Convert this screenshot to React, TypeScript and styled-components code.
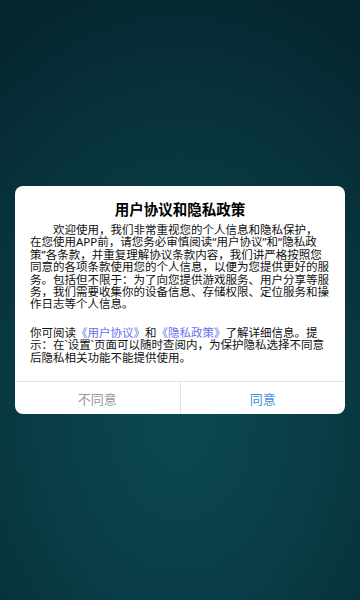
import React from "react";
import styled, { createGlobalStyle } from "styled-components";

const Global = createGlobalStyle`
  html, body { margin: 0; padding: 0; height: 100%; }
  body {
    font-family: "Noto Sans", "Noto Sans CJK SC", sans-serif;
    background: #072a33;
  }
  #root { height: 100%; }
`;

const Screen = styled.div`
  width: 360px;
  height: 600px;
  display: flex;
  align-items: center;
  justify-content: center;
  background: radial-gradient(ellipse 90% 75% at 50% 70%, #0b4952 0%, #093c46 45%, #06262f 100%);
`;

const Dialog = styled.div`
  width: 330px;
  background: #ffffff;
  border-radius: 8px;
  overflow: hidden;
  display: flex;
  flex-direction: column;
`;

const Content = styled.div`
  padding: 13px 15px 17px;
  display: flex;
  flex-direction: column;
`;

const Title = styled.h1`
  margin: 0 0 5px;
  text-align: center;
  font-size: 14.5px;
  line-height: 20px;
  font-weight: 700;
  color: #000;
  font-family: "Noto Sans", "Noto Sans CJK SC", sans-serif;
`;

const Paragraph = styled.p<{ $indent?: boolean; $gap?: number }>`
  margin: 0 0 ${(p) => p.$gap ?? 0}px;
  font-size: 11.5px;
  line-height: 12.4px;
  color: #111;
  text-indent: ${(p) => (p.$indent ? "2em" : "0")};
  word-break: break-all;
`;

const Link = styled.span`
  color: #6670ee;
`;

const Buttons = styled.div`
  display: flex;
  border-top: 1px solid #e2e2e2;
  height: 32px;
`;

const Button = styled.div<{ $primary?: boolean }>`
  flex: 1;
  display: flex;
  align-items: center;
  justify-content: center;
  font-size: 13px;
  color: ${(p) => (p.$primary ? "#4a8fda" : "#9a9a9a")};
  & + & {
    border-left: 1px solid #e2e2e2;
  }
`;

export default function App() {
  return (
    <>
      <Global />
      <Screen>
        <Dialog>
          <Content>
            <Title>用户协议和隐私政策</Title>
            <Paragraph $indent $gap={16}>
              欢迎使用，我们非常重视您的个人信息和隐私保护，
              <br />
              在您使用APP前，请您务必审慎阅读“用户协议”和“隐私政策”各条款，并重复理解协议条款内容，我们讲严格按照您同意的各项条款使用您的个人信息，以便为您提供更好的服务。包括但不限于：为了向您提供游戏服务、用户分享等服务，我们需要收集你的设备信息、存储权限、定位服务和操作日志等个人信息。
            </Paragraph>
            <Paragraph>
              你可阅读<Link>《用户协议》</Link>和<Link>《隐私政策》</Link>了解详细信息。提示：在`设置`页面可以随时查阅内，为保护隐私选择不同意后隐私相关功能不能提供使用。
            </Paragraph>
          </Content>
          <Buttons>
            <Button>不同意</Button>
            <Button $primary>同意</Button>
          </Buttons>
        </Dialog>
      </Screen>
    </>
  );
}
